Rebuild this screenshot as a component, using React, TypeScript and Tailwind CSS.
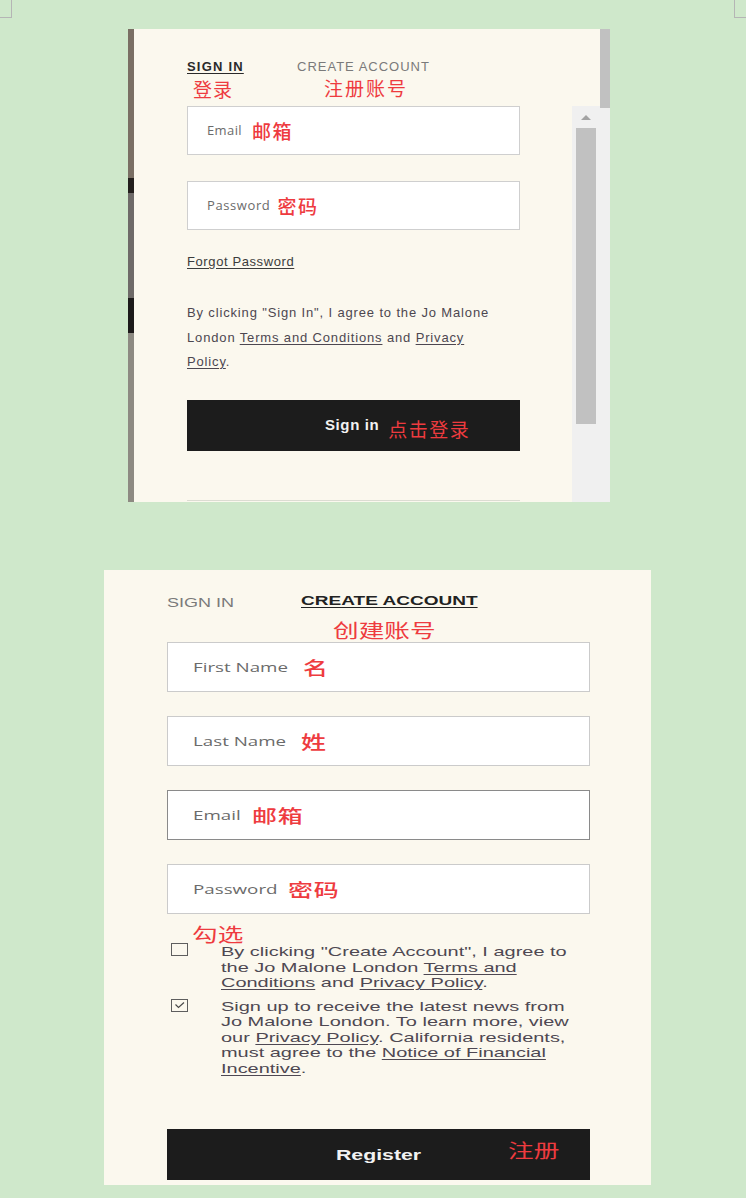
import React from "react";

const sans = { fontFamily: '"Liberation Sans", Arial, "Noto Sans CJK SC", sans-serif' };
const ui = { fontFamily: '"Open Sans", "Noto Sans", "Noto Sans CJK SC", sans-serif' };
const cjk = { fontFamily: '"Noto Sans CJK SC", sans-serif' };

function Note({ children, className = "" }: { children: React.ReactNode; className?: string }) {
  return (
    <span style={cjk} className={`text-[#ee3b3f] ${className}`}>
      {children}
    </span>
  );
}

// the second screenshot is stretched sideways, so its texts are widened
function Wide({ children, className = "" }: { children: React.ReactNode; className?: string }) {
  return <span className={`inline-block origin-left scale-x-[1.5] whitespace-nowrap ${className}`}>{children}</span>;
}

function WideNote({ children, className = "" }: { children: React.ReactNode; className?: string }) {
  return (
    <span style={cjk} className={`inline-block origin-left scale-x-[1.35] whitespace-nowrap text-[#ee3b3f] ${className}`}>
      {children}
    </span>
  );
}

function U({ children }: { children: React.ReactNode }) {
  return <span className="underline underline-offset-2">{children}</span>;
}

function SmallField({
  label,
  note,
  className = "",
  labelClass = "",
  noteClass = "",
}: {
  label: string;
  note: string;
  className?: string;
  labelClass?: string;
  noteClass?: string;
}) {
  return (
    <div className={`flex h-[49px] w-[333px] items-center border border-[#cfcfcf] bg-white pl-[19px] ${className}`}>
      <span style={ui} className={`text-[13px] text-[#6b6b6b] ${labelClass}`}>
        {label}
      </span>
      <Note className={`text-[19px] font-medium leading-none tracking-[1.5px] ${noteClass}`}>{note}</Note>
    </div>
  );
}

function SignInPanel() {
  return (
    <div className="ml-[128px] mt-[29px] flex h-[473px] w-[482px]">
      {/* photo edge behind the drawer */}
      <div className="flex w-[6px] flex-col">
        <div className="h-[149px] bg-[#7a6f64]" />
        <div className="h-[15px] bg-[#231f1d]" />
        <div className="h-[105px] bg-[#6e6a68]" />
        <div className="h-[35px] bg-[#1c1a1a]" />
        <div className="flex-1 bg-[#8d8a82]" />
      </div>

      <div className="flex flex-1 bg-[#fbf8ee]">
        <div className="flex-1 pl-[53px]" style={sans}>
          <div className="mt-[30px] flex h-[16px] items-center text-[13px]">
            <span className="w-[110px] shrink-0">
              <span className="font-bold tracking-[1.2px] text-[#2a2a2a] underline underline-offset-2">SIGN IN</span>
            </span>
            <span className="tracking-[1px] text-[#7a7a7a]">CREATE ACCOUNT</span>
          </div>
          <div className="flex h-[31px] items-start pt-[4px]">
            <Note className="ml-[6px] text-[19px] leading-none tracking-[1px]">登录</Note>
            <Note className="ml-[91px] -mt-[1px] text-[19px] leading-none tracking-[2px]">注册账号</Note>
          </div>

          <SmallField label="Email" note="邮箱" labelClass="tracking-[0.4px]" noteClass="ml-[10px]" />
          <SmallField label="Password" note="密码" className="mt-[26px]" labelClass="tracking-[0.6px]" noteClass="ml-[7px]" />

          <div className="mt-[24px] text-[13px] leading-[16px] tracking-[0.6px] text-[#3c3c3c]">
            <U>Forgot Password</U>
          </div>

          <p className="mt-[31px] w-[318px] text-[13px] leading-[24.5px] tracking-[0.85px] text-[#4d4750]">
            By clicking "Sign In", I agree to the Jo Malone London <U>Terms and Conditions</U> and{" "}
            <U>Privacy Policy</U>.
          </p>

          <div className="mt-[25px] flex h-[51px] w-[333px] items-center bg-[#1c1c1c]">
            <span className="ml-[138px] text-[15px] font-bold tracking-[0.6px] text-[#f2f2f2]">Sign in</span>
            <Note className="ml-[9px] mt-[6px] text-[19px] leading-none tracking-[1.5px]">点击登录</Note>
          </div>

          <div className="mt-[49px] w-[333px] border-t border-[#dcdcd2]" />
        </div>

        {/* inner scroll bar */}
        <div className="flex w-[28px] flex-col">
          <div className="h-[77px]" />
          <div className="flex flex-1 flex-col items-center bg-[#f0f0f0]">
            <div className="mt-[9px] h-0 w-0 border-x-[5px] border-b-[5px] border-x-transparent border-b-[#a3a3a3]" />
            <div className="mt-[8px] h-[296px] w-[20px] bg-[#c1c1c1]" />
          </div>
        </div>
      </div>

      {/* outer scroll bar */}
      <div className="flex w-[10px] flex-col bg-[#f0f0f0]">
        <div className="h-[79px] bg-[#c1c1c1]" />
      </div>
    </div>
  );
}

function WideField({
  label,
  note,
  slot,
  className = "",
}: {
  label: string;
  note: string;
  slot: string;
  className?: string;
}) {
  return (
    <div className={`flex h-[50px] w-[423px] items-center border bg-white pl-[25px] ${className}`}>
      <span className={`${slot} shrink-0`}>
        <Wide className="text-[12.5px] text-[#6b6b6b]">
          <span style={ui}>{label}</span>
        </Wide>
      </span>
      <WideNote className="text-[18.5px] font-medium leading-none tracking-[0.5px]">{note}</WideNote>
    </div>
  );
}

function Check({ checked, className = "" }: { checked?: boolean; className?: string }) {
  return (
    <div className={`flex h-[13px] w-[17px] shrink-0 items-center justify-center border border-[#5e5e5e] bg-[#fbf8ee] ${className}`}>
      {checked && (
        <svg width="11" height="8" viewBox="0 0 11 8" fill="none">
          <path d="M1.5 3.5 L4.5 6.5 L10 1.5" stroke="#4a4a4a" strokeWidth="1.2" />
        </svg>
      )}
    </div>
  );
}

function CreatePanel() {
  const para =
    "inline-block w-[236px] origin-left scale-x-[1.5] text-[13.3px] leading-[15.5px] text-[#4e4852]";
  return (
    <div className="ml-[104px] mt-[68px] h-[615px] w-[547px] bg-[#fbf8ee] pl-[63px]" style={sans}>
      <div className="mt-[24px] flex h-[16px] items-center">
        <span className="w-[134px] shrink-0">
          <Wide className="text-[12px] text-[#7a7a7a]">SIGN IN</Wide>
        </span>
        <Wide className="text-[12.7px] font-bold text-[#222] underline underline-offset-2">CREATE ACCOUNT</Wide>
      </div>
      <div className="flex h-[32px] items-center pl-[166px]">
        <WideNote className="mt-[6px] text-[19px] leading-none">创建账号</WideNote>
      </div>

      <WideField label="First Name" note="名" slot="w-[110px]" className="border-[#cbcbcb]" />
      <WideField label="Last Name" note="姓" slot="w-[108px]" className="mt-[24px] border-[#cbcbcb]" />
      <WideField label="Email" note="邮箱" slot="w-[59px]" className="mt-[24px] border-[#8a8a8a]" />
      <WideField label="Password" note="密码" slot="w-[95px]" className="mt-[24px] border-[#cbcbcb]" />

      <div className="flex h-[30px] items-end pl-[25px]">
        <WideNote className="text-[19px] leading-[20px]">勾选</WideNote>
      </div>

      <div className="flex">
        <div className="w-[54px] shrink-0 pl-[4px]">
          <Check className="-mt-[1px]" />
        </div>
        <p className={para}>
          By clicking "Create Account", I agree to the Jo Malone London <U>Terms and Conditions</U> and{" "}
          <U>Privacy Policy</U>.
        </p>
      </div>
      <div className="mt-[8px] flex">
        <div className="w-[54px] shrink-0 pl-[4px]">
          <Check checked />
        </div>
        <p className={para}>
          Sign up to receive the latest news from Jo Malone London. To learn more, view our{" "}
          <U>Privacy Policy</U>. California residents, must agree to the <U>Notice of Financial Incentive</U>.
        </p>
      </div>

      <div className="mt-[53px] flex h-[51px] w-[423px] items-center bg-[#1c1c1c] pl-[169px]">
        <span className="w-[172px] shrink-0">
          <Wide className="text-[14.2px] font-bold text-[#f2f2f2]">Register</Wide>
        </span>
        <WideNote className="mb-[10px] text-[19px] leading-none">注册</WideNote>
      </div>
    </div>
  );
}

export default function App() {
  return (
    <div className="relative h-[1198px] w-[746px] overflow-hidden bg-[#cfe8cb]">
      {/* page corner marks */}
      <div className="absolute left-0 top-0 h-[18px] w-[12px] border-b border-r border-[#b5b5b5]" />
      <div className="absolute right-0 top-0 h-[18px] w-[12px] border-b border-l border-[#b5b5b5]" />
      <div className="flex flex-col">
        <SignInPanel />
        <CreatePanel />
      </div>
    </div>
  );
}
